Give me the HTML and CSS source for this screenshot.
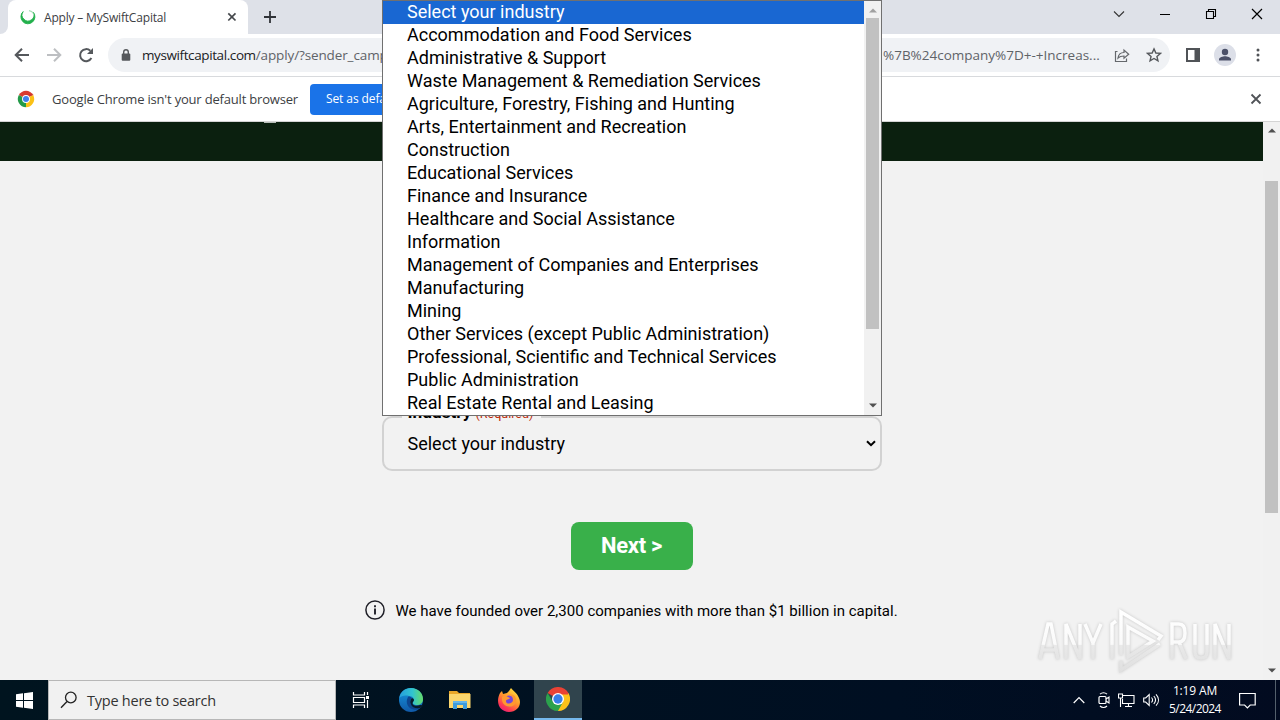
FILE: index.html
```html
<!DOCTYPE html>
<html lang="en">
<head>
<meta charset="utf-8">
<title>Apply – MySwiftCapital</title>
<link rel="stylesheet" href="styles.css">
</head>
<body>
<div class="desktop">
  <div class="tabstrip">
    <div class="tab-edge"></div>
    <div class="tab">
      <svg class="favicon" width="16" height="16" viewBox="0 0 16 16"><path d="M3.2 2.6A7 7 0 1 0 13.2 3.2A5.900 5.900 0 1 1 3.200 2.600Z" fill="#22b04c" stroke="#22b04c" stroke-width=".9"/><path d="M9 1.600A6.600 6.600 0 0 1 13.500 4.500" fill="none" stroke="#a6dfb6" stroke-width="1.300"/></svg>
      <span class="tab-title">Apply – MySwiftCapital</span>
      <svg class="tab-close" width="10" height="10" viewBox="0 0 10 10"><path d="M1.300 1.300l7.200 7.200M8.500 1.300L1.300 8.500" stroke="#44474b" stroke-width="1.700"/></svg>
    </div>
    <svg class="new-tab" width="14" height="14" viewBox="0 0 14 14"><path d="M7 1v12M1 7h12" stroke="#303338" stroke-width="1.800"/></svg>
    <div class="window-buttons">
      <svg width="12" height="12" viewBox="0 0 12 12"><path d="M1 3.500l5 5 5-5" fill="none" stroke="#333" stroke-width="1.100"/></svg>
      <svg width="12" height="12" viewBox="0 0 12 12"><path d="M1 6.500h10" stroke="#000"/></svg>
      <svg width="12" height="12" viewBox="0 0 12 12"><path d="M1.500 3.500h7v7h-7zM3.500 3.500v-2h7v7h-2" fill="none" stroke="#000" stroke-width="1.100"/></svg>
      <svg width="12" height="12" viewBox="0 0 12 12"><path d="M1 1l10 10M11 1L1 11" stroke="#000" stroke-width="1.200"/></svg>
    </div>
  </div>

  <div class="toolbar">
    <div class="nav">
      <svg width="16" height="16" viewBox="0 0 16 16"><path d="M15 8H2M8 1.700L1.700 8 8 14.300" fill="none" stroke="#55585c" stroke-width="2"/></svg>
      <svg width="16" height="16" viewBox="0 0 16 16"><path d="M1 8h13M8 1.700L14.300 8 8 14.300" fill="none" stroke="#bdbfc2" stroke-width="2"/></svg>
      <svg width="16" height="16" viewBox="0 0 16 16"><path d="M13.400 11A6 6 0 1 1 12.300 3.800" fill="none" stroke="#55585c" stroke-width="2"/><path d="M15 1v6H9z" fill="#55585c"/></svg>
    </div>
    <div class="omnibox">
      <svg class="lock" width="10" height="12" viewBox="0 0 10 12"><rect x=".7" y="4.500" width="8.600" height="7.200" rx="1" fill="#55585c"/><path d="M2.700 5V3a2.300 2.300 0 0 1 4.600 0v2" fill="none" stroke="#55585c" stroke-width="1.400"/></svg>
      <span class="url"><span class="host">myswiftcapital.com</span>/apply/?sender_campa</span>
      <span class="url url-tail">%7B%24company%7D+-+Increas...</span>
      <svg class="share" width="16" height="15" viewBox="0 0 16 15"><path d="M3.500 3.500H1.500v10h11v-3M4 10c.5-4 2.700-5.500 6-5.500V2l4.700 4.200L10 10.300V8C7.500 8 5.500 8.500 4 10z" fill="none" stroke="#65686c" stroke-width="1.200"/></svg>
      <svg class="star" width="16" height="16" viewBox="0 0 16 16"><path d="M8 1.900l1.850 4.100 4.500.4-3.400 3 1 4.400L8 11.500l-3.950 2.300 1-4.400-3.400-3 4.500-.4z" fill="none" stroke="#55585c" stroke-width="1.400"/></svg>
    </div>
    <svg class="panel" width="14" height="14" viewBox="0 0 14 14"><path d="M0 0h14v14H0zM2 2v10h6.500V2z" fill="#505357" fill-rule="evenodd"/></svg>
    <svg class="avatar" width="22" height="22" viewBox="0 0 22 22"><circle cx="11" cy="11" r="11" fill="#dcdfe8"/><circle cx="11" cy="8" r="3.200" fill="#4b5068"/><path d="M5 16.600v-1.400c0-2 4-3 6-3s6 1 6 3v1.400z" fill="#4b5068"/></svg>
    <svg class="menu" width="4" height="14" viewBox="0 0 4 14"><circle cx="2" cy="2" r="1.500" fill="#505357"/><circle cx="2" cy="7" r="1.500" fill="#505357"/><circle cx="2" cy="12" r="1.500" fill="#505357"/></svg>
  </div>

  <div class="infobar">
    <svg class="chrome-small" width="18" height="18" viewBox="0 0 48 48"><circle cx="24" cy="24" r="22" fill="#fff"/><path d="M24 24L5 13A22 22 0 0 1 43 13z" fill="#d93a2f"/><path d="M24 24L43 13A22 22 0 0 1 24 46z" fill="#fbc116"/><path d="M24 24v22A22 22 0 0 1 5 13z" fill="#239a49"/><path d="M24 14h20.500l-1.500-3H24z" fill="#c33126" opacity=".5"/><circle cx="24" cy="24" r="10.500" fill="#fff"/><circle cx="24" cy="24" r="8" fill="#3f80ee"/></svg>
    <span class="info-text">Google Chrome isn't your default browser</span>
    <span class="default-button">Set as default</span>
    <svg class="info-close" width="12" height="12" viewBox="0 0 12 12"><path d="M1.500 1.500l9 9M10.500 1.500l-9 9" stroke="#505357" stroke-width="1.800"/></svg>
  </div>

  <div class="viewport">
    <div class="page">
      <div class="site-header"><span class="logo-tip"></span></div>
      <div class="form">
        <div class="field">
          <span class="label"><b>Industry</b><span class="required">(Required)</span></span>
          <span class="value">Select your industry</span>
          <svg width="10" height="7" viewBox="0 0 10 7"><path d="M1 1.200l4 4 4-4" fill="none" stroke="#000" stroke-width="2"/></svg>
        </div>
        <div class="next">Next &gt;</div>
        <div class="note">
          <svg width="20" height="20" viewBox="0 0 20 20"><circle cx="10" cy="10" r="9.100" fill="none" stroke="#202028" stroke-width="1.500"/><path d="M10 8.500v6M10 5.300v2" stroke="#202028" stroke-width="1.900"/></svg>
          <span>We have founded over 2,300 companies with more than $1 billion in capital.</span>
        </div>
      </div>
    </div>
    <div class="scrollbar page-scroll">
      <svg width="8" height="5" viewBox="0 0 8 5"><path d="M0 4.500L4 .5l4 4z" fill="#505050"/></svg>
      <div class="thumb"></div>
      <svg width="8" height="5" viewBox="0 0 8 5"><path d="M0 .5l4 4 4-4z" fill="#505050"/></svg>
    </div>
  </div>

  <div class="taskbar">
    <div class="start"><svg width="17" height="17" viewBox="0 0 17 17"><path d="M0 2.200l7-.9V8H0zM8 1.200L17 0v8H8zM0 9h7v6.700l-7-.9zM8 9h9v8l-9-1.200z" fill="#fff"/></svg></div>
    <div class="search">
      <svg width="18" height="18" viewBox="0 0 18 18"><circle cx="10.800" cy="6.500" r="5.300" fill="none" stroke="#222" stroke-width="1.300"/><path d="M7 10.400L1 16.700" stroke="#222" stroke-width="1.400"/></svg>
      <span>Type here to search</span>
    </div>
    <div class="task"><svg width="18" height="18" viewBox="0 0 18 18"><path d="M1.500 1v3h11V1M1.500 17v-3h11v3M1.500 6.500h11v5h-11zM15.500 1v3M15.500 9v8" fill="none" stroke="#fff" stroke-width="1.200"/><rect x="14" y="5" width="3" height="3" fill="#fff"/></svg></div>
    <div class="task edge"><svg width="26" height="26" viewBox="0 0 26 26">
      <defs><linearGradient id="edge-top" x1="0" x2="1"><stop offset="0" stop-color="#269edd"/><stop offset=".55" stop-color="#31c4d0"/><stop offset="1" stop-color="#66dc68"/></linearGradient><linearGradient id="edge-low" y2="1" x2="0"><stop stop-color="#1697de"/><stop offset="1" stop-color="#1059a8"/></linearGradient></defs>
      <circle cx="13" cy="13" r="12" fill="url(#edge-low)"/><path d="M1.300 11C2 5 7 1 13 1c7 0 12 5 12 11 0 4-3 6-6 6-3 0-5-1-4-3 2-3 0-6-4-6-4-1-8 0-9.700 2z" fill="url(#edge-top)"/><path d="M10 10c-4 7 2 15 11 12 2-1 3-3 3-4-3 2-8 2-9-1-3-2-3-4-1-6-1-1-3-2-4-1z" fill="#0d4690"/><path d="M14 11c3 1 2 3 1 4-2 3 3 5 7 3l3 .2-1 2c-4 2-10 1-11-3-1-2-1-4 1-6.200z" fill="#071c2b"/></svg></div>
    <div class="task"><svg width="22" height="20" viewBox="0 0 22 20"><path d="M0 1h8l2 2h11v15H0z" fill="#e9a729"/><path d="M0 4h21.500v14H0z" fill="#fbd66d"/><path d="M4 19v-8h14v8h-4v-4H8v4z" fill="#3c9bdd"/><path d="M4 11h14v2H4z" fill="#63b5eb"/></svg></div>
    <div class="task"><svg width="24" height="24" viewBox="0 0 24 24"><defs><linearGradient id="fox" x1=".8" y1="0" x2=".2" y2="1"><stop offset="0" stop-color="#ffe43f"/><stop offset=".45" stop-color="#ff982c"/><stop offset=".8" stop-color="#ff3654"/><stop offset="1" stop-color="#df1f7d"/></linearGradient></defs><path d="M3 5l2-2 1 3 4-1 2-2 2-3c2 3 6 5 7 8 5 8 0 16-9 16S-2 15 3 5z" fill="url(#fox)"/><circle cx="12" cy="13" r="5.500" fill="#7445dc"/><path d="M5 9c3-3 6 0 8 1-1 2-4 1-4 3 0 4 7 3 7-1 0-3-2-5-4-5 5-2 8 3 7 7-2 7-13 6-14-2z" fill="#ff9830"/></svg></div>
    <div class="task active"><svg width="24" height="24" viewBox="0 0 48 48"><path d="M24 24L3.200 12A24 24 0 0 1 44.800 12z" fill="#e94235"/><path d="M24 24l10-12h10.800A24 24 0 0 1 24 48z" fill="#fcc21b"/><path d="M34 30L24 48A24 24 0 0 1 3.200 12L14 30z" fill="#2ba24c"/><path d="M24 12h20.800l-1 3H24z" fill="#e94235"/><circle cx="24" cy="24" r="12" fill="#fff"/><circle cx="24" cy="24" r="9.300" fill="#377fe9"/></svg></div>
    <div class="tray">
      <svg width="12" height="8" viewBox="0 0 12 8"><path d="M.7 7L6 1.500 11.300 7" fill="none" stroke="#fff" stroke-width="1.200"/></svg>
      <svg width="12" height="18" viewBox="0 0 12 18"><rect x="1" y="5.500" width="7" height="7" rx="1" fill="none" stroke="#fff" stroke-width="1.200"/><path d="M8 8l3-2v6L8 10M2 3.200c2-2 5-2 7 0M2 15c2 2 5 2 7 0" fill="none" stroke="#fff" stroke-width="1.100"/></svg>
      <svg width="17" height="15" viewBox="0 0 17 15"><path d="M5 2.500h11v8H4.500V6M10.500 10.500v3M7 13.500h7M.5 1h4v4h-4zM2.500 5v9" fill="none" stroke="#fff" stroke-width="1.100"/></svg>
      <svg width="17" height="14" viewBox="0 0 17 14"><path d="M.7 5v4h2l3.500 3.500v-11L2.700 5zM8.500 4.500c1.300 1.500 1.300 3.500 0 5M10.800 3c2.200 2.500 2.200 5.500 0 8M13 1.300c3.300 3.500 3.300 8 0 11.400" fill="none" stroke="#fff" stroke-width="1.100"/></svg>
      <div class="clock"><span class="time">1:19 AM</span><span class="date">5/24/2024</span></div>
      <svg class="action" width="17" height="17" viewBox="0 0 17 17"><path d="M.6 1.500h15.600v11.500h-5L8.400 15.800 5.600 13h-5z" fill="none" stroke="#fff" stroke-width="1.200"/></svg>
      <div class="peek"></div>
    </div>
  </div>

  <div class="popup">
    <div class="options">
      <div class="selected">Select your industry</div>
      <div>Accommodation and Food Services</div>
      <div>Administrative &amp; Support</div>
      <div>Waste Management &amp; Remediation Services</div>
      <div>Agriculture, Forestry, Fishing and Hunting</div>
      <div>Arts, Entertainment and Recreation</div>
      <div>Construction</div>
      <div>Educational Services</div>
      <div>Finance and Insurance</div>
      <div>Healthcare and Social Assistance</div>
      <div>Information</div>
      <div>Management of Companies and Enterprises</div>
      <div>Manufacturing</div>
      <div>Mining</div>
      <div>Other Services (except Public Administration)</div>
      <div>Professional, Scientific and Technical Services</div>
      <div>Public Administration</div>
      <div>Real Estate Rental and Leasing</div>
    </div>
    <div class="scrollbar popup-scroll">
      <svg width="8" height="5" viewBox="0 0 8 5"><path d="M0 4.500L4 .5l4 4z" fill="#a0a0a0"/></svg>
      <div class="thumb"></div>
      <svg width="8" height="5" viewBox="0 0 8 5"><path d="M0 .5l4 4 4-4z" fill="#505050"/></svg>
    </div>
  </div>

  <div class="watermark">
    <svg width="204" height="70" viewBox="0 0 204 70">
      <defs><linearGradient id="wm" gradientUnits="userSpaceOnUse" x1="0" y1="8" x2="0" y2="66"><stop offset="0" stop-color="#fff"/><stop offset=".54" stop-color="#fafafa"/><stop offset=".56" stop-color="#e9e9e9"/><stop offset="1" stop-color="#e0e0e0"/></linearGradient></defs>
      <g class="wm-shape" fill="none" stroke="url(#wm)" stroke-width="3.500">
        <path d="M6 54l8-35h3l7 35M9 45h13M32 54V19l14 35V19M51 19l8 19 8-19M59 38v16"/>
        <path d="M138 54V19h7q6 0 6 9t-6 9h-7M145 37l7 17M161 19v28q0 6 6 6t6-6V19M181 54V19l14 35V19"/>
        <path d="M78 54V19l4-3M87 50V7l40 24-3 4M87 56v9l39-26M94 22l25 14-25 16z"/>
      </g>
    </svg>
  </div>
</div>
</body>
</html>
```
FILE: styles.css
```css
* { box-sizing: border-box; }
body { margin: 0; font-family: "Open Sans", "Noto Sans", sans-serif; }
svg { display: block; flex: none; }
.desktop { position: relative; width: 1280px; height: 720px; overflow: hidden; display: flex; flex-direction: column; background: #f2f2f2; white-space: nowrap; }

.tabstrip { height: 34px; flex: none; display: flex; align-items: stretch; background: #dee1e8; }
.tab-edge { width: 8px; background: #fff; }
.tab-edge::before { content: ""; display: block; height: 34px; background: #dee1e8; border-bottom-right-radius: 8px; }
.tab { width: 240px; display: flex; align-items: center; padding: 0 11px 0 12px; background: #fff; border-radius: 8px 8px 0 0; }
.tab-title { flex: 1; margin-left: 8px; font-size: 12px; color: #3c4043; letter-spacing: -0.18px; }
.new-tab { margin: 10px 0 0 15px; }
.window-buttons { margin-left: auto; display: flex; gap: 34px; padding: 8px 17px 0 0; }

.toolbar { height: 43px; flex: none; display: flex; align-items: center; padding: 0 20px 0 14px; background: #fff; border-bottom: 1px solid #d8dadd; }
.nav { display: flex; gap: 16px; }
.omnibox { width: 1064px; height: 34px; margin-left: 14px; display: flex; align-items: center; padding-left: 13px; border-radius: 17px; background: #f0f2f5; }
.url { width: 741px; margin-left: 11px; font-size: 13.5px; color: #5f6368; letter-spacing: -0.12px; overflow: hidden; }
.url .host { color: #202124; letter-spacing: -0.4px; }
.url-tail { width: 218px; margin-left: 0; letter-spacing: 0; }
.share { margin-left: 13px; }
.star { margin-left: 16px; }
.panel { margin-left: 16px; }
.avatar { margin-left: 14px; }
.menu { margin-left: 20px; }

.infobar { height: 45px; flex: none; display: flex; align-items: center; padding: 0 18px 0 17px; background: #fff; border-bottom: 1px solid #d4d4d4; }
.info-text { width: 258px; margin-left: 17px; font-size: 13px; color: #3c4043; letter-spacing: -0.19px; }
.default-button { width: 104px; height: 31px; line-height: 30px; padding-left: 16px; border-radius: 4px; background: #1a73e8; color: #fff; font-size: 12px; letter-spacing: -0.1px; }
.info-close { margin-left: auto; }

.viewport { height: 558px; flex: none; display: flex; }
.page { flex: 1; display: flex; flex-direction: column; background: #f2f2f2; font-family: Roboto, sans-serif; }
.site-header { height: 39px; background: #0b200f; }
.logo-tip { display: block; width: 12px; height: 1px; margin-left: 264px; background: #b8beb9; }
.form { display: flex; flex-direction: column; align-items: center; padding-top: 255px; }
.field { position: relative; width: 500px; height: 55px; display: flex; align-items: center; justify-content: space-between; padding: 0 4px 0 24px; border: 2px solid #d2d2d2; border-radius: 10px; }
.label { position: absolute; left: 18px; top: -16px; height: 20px; width: 139px; padding-left: 6px; line-height: 20px; background: #f2f2f2; font-size: 17.3px; }
.required { margin-left: 4px; font-size: 12.5px; color: #c02b0a; }
.value { font-size: 18px; }
.next { width: 122px; height: 48px; margin-top: 51px; border-radius: 8px; background: #39b04a; color: #fff; font-size: 22px; font-weight: 700; line-height: 47px; text-align: center; letter-spacing: -0.3px; }
.note { display: flex; align-items: center; gap: 10px; margin-top: 30px; font-size: 15px; letter-spacing: 0.015px; }
.note span { padding-top: 1px; }

.scrollbar { width: 17px; display: flex; flex-direction: column; align-items: center; background: #f1f1f1; }
.thumb { width: 13px; background: #c1c1c1; }
.page-scroll { padding-top: 6px; }
.page-scroll .thumb { height: 332px; margin: 48px 0 155px; }

.taskbar { height: 40px; flex: none; display: flex; background: linear-gradient(90deg, #00141f, #000f22 70%, #020b20); }
.start { width: 48px; display: flex; align-items: center; justify-content: center; }
.search { width: 288px; display: flex; align-items: center; gap: 9px; padding-left: 11px; background: #f1f1f1; border: 1px solid #b7b7b7; font-size: 14.5px; color: #333; letter-spacing: -0.24px; }
.task { width: 49.500px; display: flex; align-items: center; justify-content: center; }
.edge { padding-left: 2px; }
.active { width: 48px; background: #30444d; border-bottom: 2px solid #76b9ed; }
.tray { margin-left: auto; display: flex; align-items: center; }
.tray > svg { margin-right: 8px; }
.tray > svg:first-child { margin-right: 13px; }
.clock { width: 54px; display: flex; flex-direction: column; align-items: center; color: #fff; font-size: 12px; line-height: 18px; }
.date { letter-spacing: -0.55px; }
.time { letter-spacing: -0.15px; }
.tray .action { margin: 0 19px 0 17px; }
.peek { width: 5px; height: 40px; border-left: 1px solid #54606c; }

.popup { position: absolute; left: 382px; top: 0; width: 500px; height: 416px; display: flex; background: #fff; border: 1px solid #707070; }
.options { flex: 1; font: 18px/22px Roboto, sans-serif; color: #000; }
.options div { height: 23px; padding-left: 24px; }
.options .selected { background: #1967d2; color: #fff; }
.popup-scroll { padding-top: 7px; }
.popup-scroll .thumb { height: 311px; margin: 5px 0 74px; }

.watermark { position: absolute; left: 1034px; top: 605px; }
.wm-shape { filter: drop-shadow(0 0 1.5px #c4c4c4); }
```
